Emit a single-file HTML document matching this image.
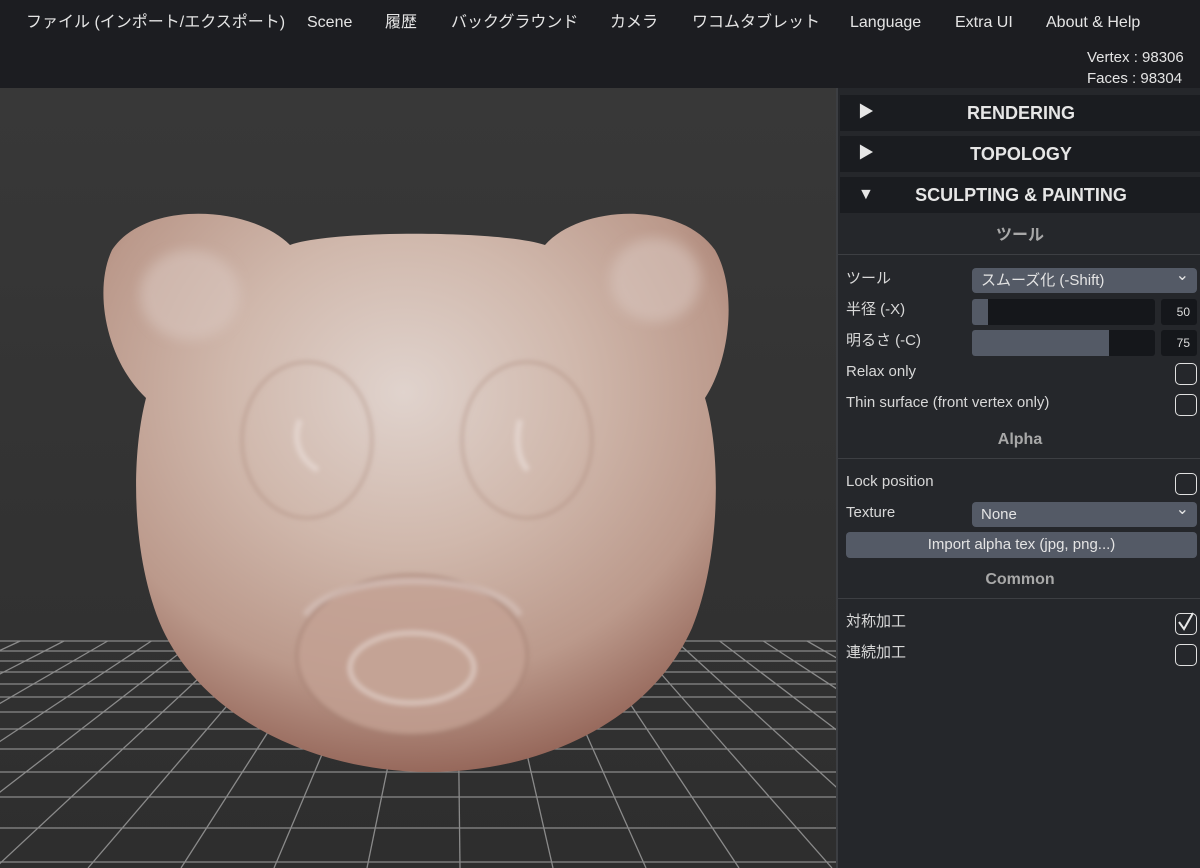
<!DOCTYPE html>
<html><head><meta charset="utf-8"><style>
*{margin:0;padding:0;box-sizing:border-box}
body{width:1200px;height:868px;overflow:hidden;background:#333;font-family:"Liberation Sans","Noto Sans CJK JP",sans-serif;position:relative}
#top{position:absolute;left:0;top:0;width:1200px;height:88px;background:#1c1d21;color:#e4e4e4;font-size:16px}
#top span{position:absolute;top:12px;height:22px;line-height:22px;display:block}
#stats{position:absolute;left:1087px;top:47px;font-size:15px;line-height:21px;color:#e4e4e4}
#vp{position:absolute;left:0;top:88px;width:836px;height:780px}
#panel{position:absolute;left:836px;top:88px;width:364px;height:780px;background:#25272b;border-left:2px solid #3c3e42;color:#d8d8d8;font-size:15px}
.hd{position:absolute;left:2px;width:362px;height:36px;background:#1a1c20;color:#e6e6e6;font-weight:bold;font-size:18px;text-align:center;line-height:36px}
.hd i{position:absolute;left:18px;top:0;font-style:normal;font-size:16px}
.sec{position:absolute;left:0;width:364px;text-align:center;color:#a8a8a8;font-weight:bold;font-size:16px;border-bottom:1px solid #3d3f43;height:34px;line-height:30px}
.lb{position:absolute;left:8px;line-height:20px;height:20px}
.sel{position:absolute;left:134px;width:225px;height:25px;background:#545a66;border-radius:4px;color:#e4e4e4;padding-left:9px;line-height:25px;font-size:15px}
.sel:after{content:"⌄";position:absolute;right:8px;top:-5px;font-size:16px}
.sl{position:absolute;left:134px;width:183px;height:26px;background:#15171b;border-radius:3px;overflow:hidden}
.sl b{display:block;height:100%;background:#545a66}
.num{position:absolute;left:323px;width:36px;height:26px;background:#15171b;border-radius:3px;font-size:12px;text-align:right;padding-right:7px;line-height:26px;color:#ddd}
.cb{position:absolute;left:337px;width:22px;height:22px;border:1.5px solid #e0e0e0;border-radius:5px}
.btn{position:absolute;left:8px;top:444px;width:351px;height:26px;background:#545a66;border-radius:4px;text-align:center;line-height:26px;color:#e4e4e4}
</style></head><body>
<div id="top">
<span style="left:26px">ファイル (インポート/エクスポート)</span>
<span style="left:307px">Scene</span>
<span style="left:385px">履歴</span>
<span style="left:451px">バックグラウンド</span>
<span style="left:610px">カメラ</span>
<span style="left:692px">ワコムタブレット</span>
<span style="left:850px">Language</span>
<span style="left:955px">Extra UI</span>
<span style="left:1046px">About &amp; Help</span>
<div id="stats">Vertex : 98306<br>Faces : 98304</div>
</div>
<svg id="vp" width="836" height="780" viewBox="0 88 836 780">
<defs>
<radialGradient id="hg" cx="0.48" cy="0.32" r="0.8">
<stop offset="0" stop-color="#e0d3cd"/><stop offset="0.35" stop-color="#d0b8ac"/><stop offset="0.65" stop-color="#bb998b"/><stop offset="0.85" stop-color="#97695c"/><stop offset="1" stop-color="#5e2e26"/></radialGradient>
<linearGradient id="bg" x1="0" y1="0" x2="0" y2="1"><stop offset="0" stop-color="#383838"/><stop offset="1" stop-color="#2e2e2e"/></linearGradient>
<filter id="bl"><feGaussianBlur stdDeviation="6"/></filter>
<filter id="bl2"><feGaussianBlur stdDeviation="2.5"/></filter>
</defs>
<rect x="0" y="88" width="836" height="780" fill="url(#bg)"/>
<g stroke="#8a8a8a" stroke-width="1.3">
<line x1="0" y1="641" x2="836" y2="641"/><line x1="0" y1="651" x2="836" y2="651"/><line x1="0" y1="661" x2="836" y2="661"/><line x1="0" y1="672" x2="836" y2="672"/><line x1="0" y1="684" x2="836" y2="684"/><line x1="0" y1="697" x2="836" y2="697"/><line x1="0" y1="712" x2="836" y2="712"/><line x1="0" y1="729" x2="836" y2="729"/><line x1="0" y1="749" x2="836" y2="749"/><line x1="0" y1="772" x2="836" y2="772"/><line x1="0" y1="797" x2="836" y2="797"/><line x1="0" y1="828" x2="836" y2="828"/><line x1="0" y1="862" x2="836" y2="862"/>
</g>
<g stroke="#8a8a8a" stroke-width="1.3" id="vl"></g>
<path d="M290,245 C330,230 500,230 545,245 C580,205 680,200 715,250 C738,290 730,360 705,398 C722,455 720,560 692,628 C650,722 540,772 430,772 C320,772 205,722 162,628 C132,560 130,460 146,398 C106,360 93,290 112,250 C145,200 250,205 290,245 Z" fill="url(#hg)"/>
<ellipse cx="190" cy="295" rx="50" ry="45" fill="#dccbc4" opacity="0.5" filter="url(#bl)"/>
<ellipse cx="655" cy="280" rx="45" ry="42" fill="#dccbc4" opacity="0.5" filter="url(#bl)"/>
<g filter="url(#bl2)">
<ellipse cx="307" cy="440" rx="65" ry="78" fill="none" stroke="#a88577" stroke-width="3" opacity="0.45"/>
<ellipse cx="527" cy="440" rx="65" ry="78" fill="none" stroke="#a88577" stroke-width="3" opacity="0.45"/>
<path d="M300,420 C292,440 300,460 318,470" stroke="#e8dcd6" stroke-width="6" fill="none" opacity="0.7"/>
<path d="M520,420 C515,440 518,460 528,470" stroke="#e8dcd6" stroke-width="6" fill="none" opacity="0.7"/>
<ellipse cx="412" cy="655" rx="115" ry="80" fill="#c3a193" stroke="#9e786a" stroke-width="2" opacity="0.8"/>
<path d="M305,615 C335,570 495,570 520,615" stroke="#d6c2ba" stroke-width="6" fill="none" opacity="0.7"/>
<ellipse cx="412" cy="668" rx="62" ry="35" fill="#c5a496" stroke="#dcc7bf" stroke-width="5" opacity="0.9"/>
</g>
</svg>
<script>
var g=document.getElementById('vl'),s='';
for(var k=-14;k<=12;k++){var xb=460+93*k;var xt=455+0.47*(xb-455);s+='<line x1="'+xt+'" y1="641" x2="'+xb+'" y2="868"/>';}
g.innerHTML=s;
</script>
<div id="panel">
<div class="hd" style="top:7px"><i>▶</i>RENDERING</div>
<div class="hd" style="top:48px"><i>▶</i>TOPOLOGY</div>
<div class="hd" style="top:89px"><i>▼</i>SCULPTING &amp; PAINTING</div>
<div class="sec" style="top:133px">ツール</div>
<div class="lb" style="top:181px">ツール</div><div class="sel" style="top:180px">スムーズ化 (-Shift)</div>
<div class="lb" style="top:212px">半径 (-X)</div><div class="sl" style="top:211px"><b style="width:16px"></b></div><div class="num" style="top:211px">50</div>
<div class="lb" style="top:243px">明るさ (-C)</div><div class="sl" style="top:242px"><b style="width:137px"></b></div><div class="num" style="top:242px">75</div>
<div class="lb" style="top:274px">Relax only</div><div class="cb" style="top:275px"></div>
<div class="lb" style="top:305px">Thin surface (front vertex only)</div><div class="cb" style="top:306px"></div>
<div class="sec" style="top:337px">Alpha</div>
<div class="lb" style="top:384px">Lock position</div><div class="cb" style="top:385px"></div>
<div class="lb" style="top:415px">Texture</div><div class="sel" style="top:414px">None</div>
<div class="btn">Import alpha tex (jpg, png...)</div>
<div class="sec" style="top:477px">Common</div>
<div class="lb" style="top:524px">対称加工</div><div class="cb" style="top:525px"><svg width="20" height="20" style="position:absolute;left:0;top:-2px"><path d="M3 10 L8 17 L17 1" stroke="#e8e8e8" stroke-width="2" fill="none"/></svg></div>
<div class="lb" style="top:555px">連続加工</div><div class="cb" style="top:556px"></div>
</div>
</body></html>
